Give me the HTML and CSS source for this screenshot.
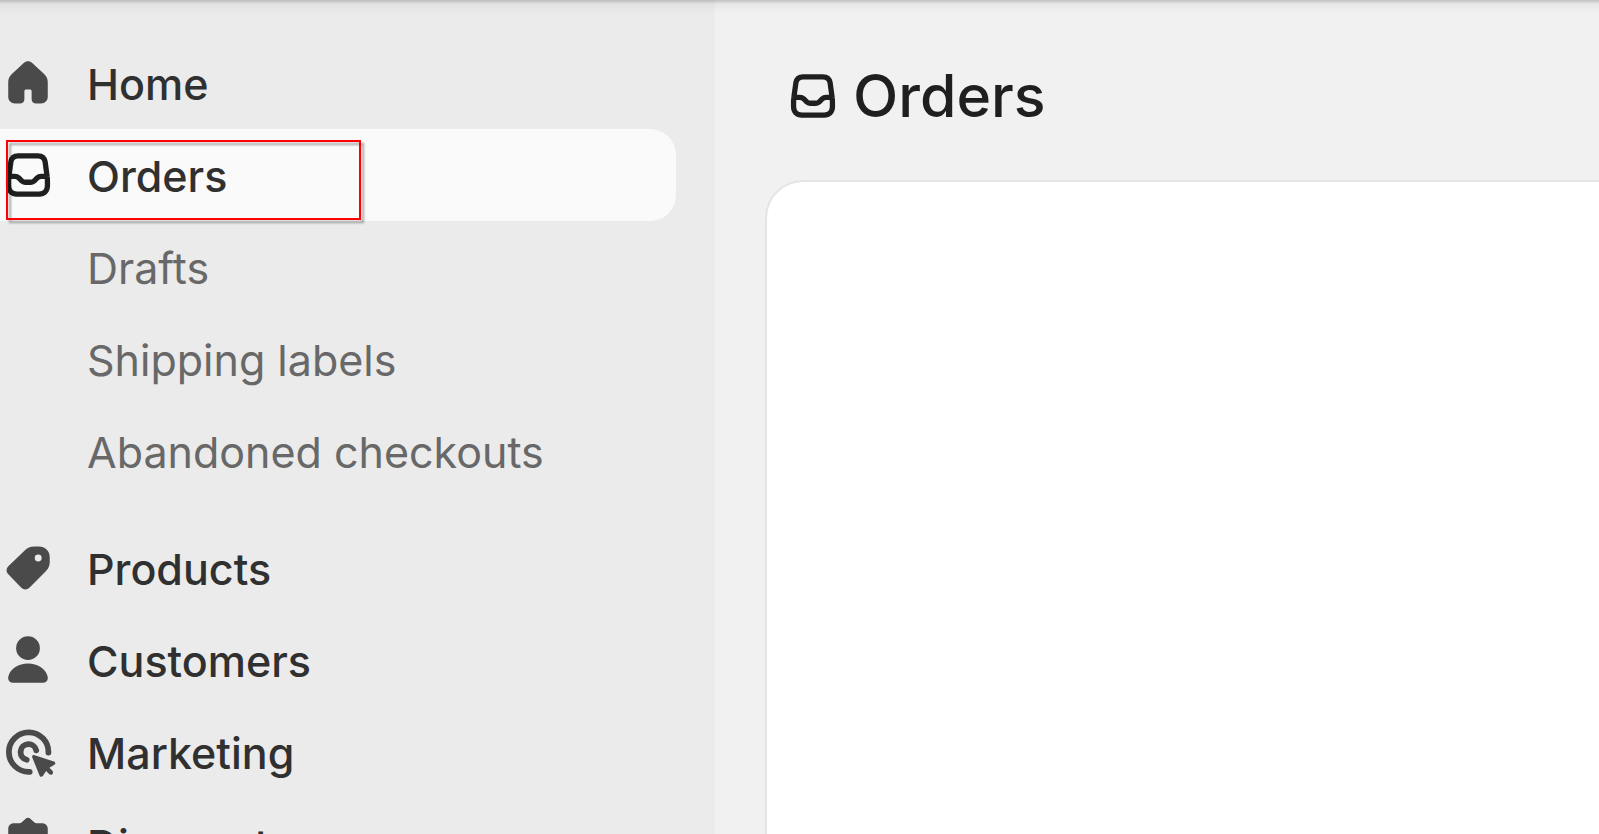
FILE: index.html
```
<!DOCTYPE html>
<html lang="en">
    <head>
        <meta charset="UTF-8" />
        <meta name="viewport" content="width=device-width, initial-scale=1.0" />
        <title>Orders</title>
        <link rel="stylesheet" href="styles.css">
    </head>
    <body>
        <!-- Inbox icon, used in the menu and in the page title -->
        <svg class="sprite" aria-hidden="true">
            <symbol id="icon-inbox" viewBox="1.5 1.5 17 17">
                <path d="M7 4.2h6c1.2 0 2 .7 2.2 1.8l.6 4.4c.1.6.1 1.1.1 1.7v1.2c0 1.5-1 2.500-2.500 2.500H6.600c-1.500 0-2.500-1-2.500-2.500v-1.200c0-.6 0-1.100.1-1.700L4.800 6C5 4.900 5.800 4.200 7 4.200z M4.300 10.400h1.700c.5 0 .9.2 1.200.5l.9.9c.3.3.6.4 1 .4h1.800c.4 0 .7-.1 1-.4l.9-.9c.3-.3.7-.5 1.200-.5h1.700" fill="none" stroke="currentColor" stroke-width="1.600" stroke-linejoin="round" />
            </symbol>
        </svg>

        <div class="layout">
            <nav class="sidebar">
                <ul class="menu">
                    <li>
                        <a class="item" href="#">
                            <svg class="icon" viewBox="1.5 1.5 17 17" aria-hidden="true">
                                <path d="M8.700 3.900c.8-.7 1.800-.7 2.600 0l3.600 3.400c.8.8 1.100 1.500 1.100 2.500v4.300c0 1.300-.8 2.100-2.100 2.100h-1.400c-.8 0-1.400-.5-1.400-1.300v-2.300c0-.4-.2-.6-.6-.6h-1c-.4 0-.6.2-.6.6v2.300c0 .8-.6 1.300-1.400 1.300H6.100c-1.300 0-2.100-.8-2.100-2.100V9.800c0-1 .3-1.700 1.100-2.500z" />
                            </svg>
                            <span class="label">Home</span>
                        </a>
                    </li>
                    <li>
                        <a class="item active" href="#">
                            <svg class="icon" aria-hidden="true"><use href="#icon-inbox" /></svg>
                            <span class="label">Orders</span>
                            <span class="highlight"></span>
                        </a>
                    </li>
                    <li><a class="item sub" href="#"><span class="label">Drafts</span></a></li>
                    <li><a class="item sub" href="#"><span class="label">Shipping labels</span></a></li>
                    <li><a class="item sub" href="#"><span class="label">Abandoned checkouts</span></a></li>
                </ul>
                <ul class="menu">
                    <li>
                        <a class="item" href="#">
                            <svg class="icon" viewBox="1.5 1.5 17 17" aria-hidden="true">
                                <path fill-rule="evenodd" d="M11.900 3.500h1.400c1.900 0 3.300 1.300 3.300 3.200v1.400c0 1.200-.4 2.100-1.200 2.900l-4.900 4.900c-.8.8-1.800.8-2.600 0l-3.800-3.900c-.8-.8-.8-1.800 0-2.600l4.900-4.700c.8-.8 1.700-1.200 2.900-1.200z M13.100 5.900a1.050 1.050 0 1 0 0 2.100a1.050 1.050 0 1 0 0-2.100z" />
                            </svg>
                            <span class="label">Products</span>
                        </a>
                    </li>
                    <li>
                        <a class="item" href="#">
                            <svg class="icon" viewBox="1.5 1.5 17 17" aria-hidden="true">
                                <circle cx="10" cy="6.400" r="3.600" />
                                <path d="M10 11.100c3 0 5.200 1.500 5.900 3.700.4 1.200-.3 2.100-1.300 2.100H5.400c-1 0-1.700-.9-1.300-2.100.7-2.200 2.900-3.700 5.900-3.700z" />
                            </svg>
                            <span class="label">Customers</span>
                        </a>
                    </li>
                    <li>
                        <a class="item" href="#">
                            <svg class="icon" viewBox="1.5 1.5 17 17" aria-hidden="true">
                                <path d="M16.200 10.200A6 6 0 1 0 10.500 16 M12.500 9.500A2.400 2.400 0 1 0 9.600 12.350" fill="none" stroke="currentColor" stroke-width="1.750" stroke-linecap="round" />
                                <path d="M11.300 11.700c-.2-.5.2-.9.700-.7l5.900 1.900c.5.2.5.800.1 1l-1.500.9.900.9c.6.700-.3 1.600-1 1l-.9-.9-1 1.500c-.3.4-.9.300-1-.2z" />
                            </svg>
                            <span class="label">Marketing</span>
                        </a>
                    </li>
                    <li>
                        <a class="item" href="#">
                            <svg class="icon" viewBox="1.5 1.5 17 17" aria-hidden="true">
                                <path d="M9.200 2.400c.5-.5 1.100-.5 1.600 0l1 .9c.3.3.6.4 1 .4h1.500c1 0 1.700.7 1.700 1.700v1.300c0 .4.100.7.4 1l1 1c.6.7.6 1.900 0 2.600l-1 1c-.3.300-.4.600-.4 1v1.500c0 1-.7 1.700-1.700 1.700h-1.500c-.4 0-.7.1-1 .4l-1 1c-.5.5-1.100.5-1.600 0l-1-1c-.3-.3-.6-.4-1-.4H5.700c-1 0-1.700-.7-1.700-1.700v-1.500c0-.4-.1-.7-.4-1l-1-1c-.6-.7-.6-1.900 0-2.600l1-1c.3-.3.4-.6.4-1V5.400c0-1 .7-1.700 1.700-1.700h1.500c.4 0 .7-.1 1-.4z" />
                            </svg>
                            <span class="label">Discounts</span>
                        </a>
                    </li>
                </ul>
            </nav>

            <main class="content">
                <header class="page-header">
                    <svg class="icon" aria-hidden="true"><use href="#icon-inbox" /></svg>
                    <h1>Orders</h1>
                </header>
                <section class="card"></section>
            </main>
        </div>
    </body>
</html>
```
FILE: styles.css
```
* {
    box-sizing: border-box;
}
body {
    margin: 0;
    font-family: Inter, "Liberation Sans", sans-serif;
    color: #303030;
    background-color: #f1f1f1;
    overflow: hidden;
}
.sprite {
    position: absolute;
    width: 0;
    height: 0;
}
.layout {
    display: flex;
    height: 100vh;
}
/* shadow of the top bar */
.layout::before {
    content: "";
    position: absolute;
    top: 0;
    left: 0;
    right: 0;
    height: 14px;
    background: linear-gradient(rgba(0, 0, 0, 0.2), rgba(0, 0, 0, 0.04) 4px, transparent);
}
.sidebar {
    flex: 0 0 715px;
    padding: 37px 39px 0 0;
    background-color: #ebebeb;
    overflow: hidden;
}
.menu {
    list-style: none;
    margin: 0 0 25px;
    padding: 0;
}
.item {
    position: relative;
    display: flex;
    align-items: center;
    gap: 31px;
    height: 92px;
    color: #303030;
    font-size: 43px;
    font-weight: 550;
    line-height: 52px;
    text-decoration: none;
    border-radius: 0 26px 26px 0;
}
.item.active {
    background-color: #fafafa;
}
.item.active .icon {
    color: #1f1f1f;
}
.item.sub {
    padding-left: 87px;
    color: #686868;
    font-weight: 430;
}
.label {
    padding-top: 2px;
}
.icon {
    flex: none;
    width: 56px;
    height: 56px;
    color: #4a4a4a;
    fill: currentColor;
}
.highlight {
    position: absolute;
    top: 11px;
    left: 6px;
    width: 355px;
    height: 80px;
    border: 2px solid #f00;
    filter: drop-shadow(3px 3px 1px rgba(0, 0, 0, 0.35));
}
.content {
    flex: 1;
    display: flex;
    flex-direction: column;
    padding-left: 50px;
    overflow: hidden;
}
.page-header {
    display: flex;
    align-items: center;
    gap: 12px;
    height: 180px;
    padding: 12px 0 0 20px;
}
.page-header .icon {
    color: #1f1f1f;
}
h1 {
    margin: 0;
    color: #1f1f1f;
    font-size: 59px;
    font-weight: 550;
    line-height: 64px;
}
.card {
    flex: 1;
    background-color: #fff;
    border: 2px solid #e4e4e4;
    border-width: 2px 0 0 2px;
    border-radius: 38px 0 0 0;
}
```
